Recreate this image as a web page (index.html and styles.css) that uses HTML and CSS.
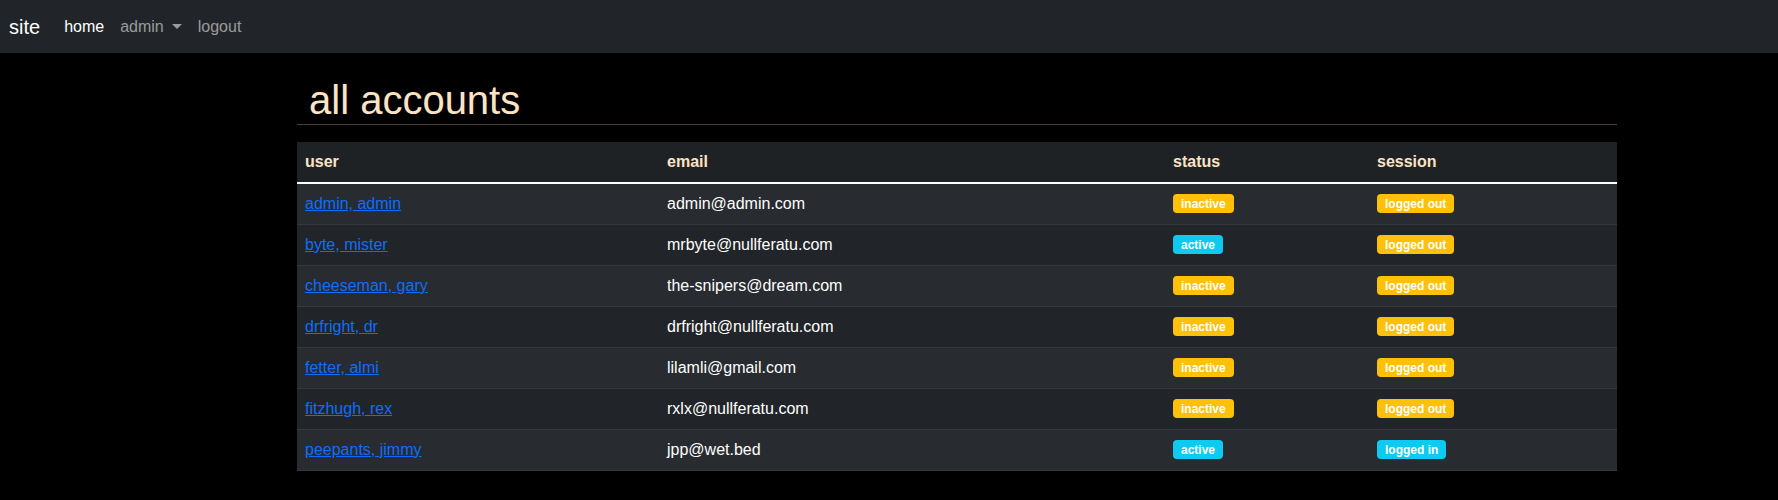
FILE: index.html
```html
<!DOCTYPE html>
<html lang="en">
<head>
    <meta charset="UTF-8">
    <meta name="viewport" content="width=device-width, initial-scale=1.0">
    <title>all accounts</title>
    <link rel="stylesheet" href="styles.css">
</head>
<body>
    <nav class='navbar'>
        <a href="#" class='brand'>site</a>
        <ul class='nav-links'>
            <li><a href="#" class='nav-link active'>home</a></li>
            <li><a href="#" class='nav-link dropdown'>admin</a></li>
            <li><a href="#" class='nav-link'>logout</a></li>
        </ul>
    </nav>

    <div id='container'>
        <h1 class='title'>all accounts</h1>
        <table id='accounts'>
            <thead>
                <tr>
                    <th class='col-user'>user</th>
                    <th class='col-email'>email</th>
                    <th class='col-status'>status</th>
                    <th class='col-session'>session</th>
                </tr>
            </thead>
            <tbody>
                <tr>
                    <td><a href="#">admin, admin</a></td>
                    <td>admin@admin.com</td>
                    <td><span class='badge warning'>inactive</span></td>
                    <td><span class='badge warning'>logged out</span></td>
                </tr>
                <tr>
                    <td><a href="#">byte, mister</a></td>
                    <td>mrbyte@nullferatu.com</td>
                    <td><span class='badge info'>active</span></td>
                    <td><span class='badge warning'>logged out</span></td>
                </tr>
                <tr>
                    <td><a href="#">cheeseman, gary</a></td>
                    <td>the-snipers@dream.com</td>
                    <td><span class='badge warning'>inactive</span></td>
                    <td><span class='badge warning'>logged out</span></td>
                </tr>
                <tr>
                    <td><a href="#">drfright, dr</a></td>
                    <td>drfright@nullferatu.com</td>
                    <td><span class='badge warning'>inactive</span></td>
                    <td><span class='badge warning'>logged out</span></td>
                </tr>
                <tr>
                    <td><a href="#">fetter, almi</a></td>
                    <td>lilamli@gmail.com</td>
                    <td><span class='badge warning'>inactive</span></td>
                    <td><span class='badge warning'>logged out</span></td>
                </tr>
                <tr>
                    <td><a href="#">fitzhugh, rex</a></td>
                    <td>rxlx@nullferatu.com</td>
                    <td><span class='badge warning'>inactive</span></td>
                    <td><span class='badge warning'>logged out</span></td>
                </tr>
                <tr>
                    <td><a href="#">peepants, jimmy</a></td>
                    <td>jpp@wet.bed</td>
                    <td><span class='badge info'>active</span></td>
                    <td><span class='badge info'>logged in</span></td>
                </tr>
            </tbody>
        </table>
    </div>
</body>
</html>
```

FILE: styles.css
```css
*{
    margin: 0;
    padding: 0;
    box-sizing: border-box;
}
body{
    background-color: #000;
    color: #fff;
    font-family: "Liberation Sans", Arial, Helvetica, sans-serif;
    font-size: 16px;
    line-height: 1.5;
}
a{
    text-decoration: none;
}

/* top bar */
.navbar{
    display: flex;
    align-items: center;
    height: 53px;
    padding: 0 9px;
    background-color: #212529;
}
.brand{
    color: #fff;
    font-size: 20px;
    margin-right: 16px;
}
.nav-links{
    display: flex;
    list-style: none;
}
.nav-link{
    display: block;
    padding: 8px 8px;
    color: rgba(255, 255, 255, .55);
}
.nav-link.active{
    color: #fff;
}
.dropdown::after{
    content: '';
    display: inline-block;
    margin-left: 8px;
    vertical-align: 3px;
    border-top: 5px solid;
    border-left: 5px solid transparent;
    border-right: 5px solid transparent;
}

/* content */
#container{
    width: 1320px;
    margin-left: 297px;
}
.title{
    color: #ffe4c4;
    font-size: 40px;
    font-weight: 500;
    line-height: 48px;
    padding: 0 12px;
    margin-top: 23px;
    border-bottom: 1px solid #4a4036;
}
#accounts{
    width: 100%;
    margin-top: 17px;
    border-collapse: collapse;
    table-layout: fixed;
    background-color: #212529;
}
.col-user{ width: 362px; }
.col-email{ width: 506px; }
.col-status{ width: 204px; }
.col-session{ width: 248px; }
th,td{
    text-align: left;
    padding: 8px;
    vertical-align: top;
}
th{
    color: #ffe4c4;
    font-weight: bold;
    border-bottom: 2px solid #fff;
    background-color: #1f2225;
}
td{
    border-bottom: 1px solid #34383c;
}
tbody tr:nth-child(odd){
    background-color: #282b30;
}
td a{
    color: #0d6efd;
    text-decoration: underline;
}
.badge{
    display: inline-block;
    padding: 4px 8px 3px;
    font-size: 12px;
    font-weight: bold;
    line-height: 1;
    border-radius: 4px;
    color: #fff;
    vertical-align: 1px;
}
.warning{
    background-color: #ffc107;
}
.info{
    background-color: #0dcaf0;
}
```
